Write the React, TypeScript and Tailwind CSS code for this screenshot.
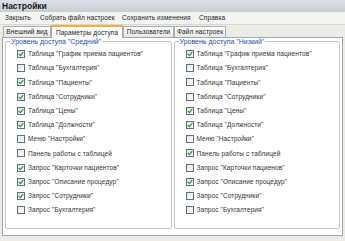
import React from 'react';

type Item = { label: string; checked: boolean };

const middle: Item[] = [
    { label: 'Таблица "График приема пациентов"', checked: true },
    { label: 'Таблица "Бухгалтерия"', checked: false },
    { label: 'Таблица "Пациенты"', checked: true },
    { label: 'Таблица "Сотрудники"', checked: true },
    { label: 'Таблица "Цены"', checked: true },
    { label: 'Таблица "Должности"', checked: true },
    { label: 'Меню "Настройки"', checked: false },
    { label: 'Панель работы с таблицей', checked: false },
    { label: 'Запрос "Карточки пациентов"', checked: true },
    { label: 'Запрос "Описание процедур"', checked: true },
    { label: 'Запрос "Сотрудники"', checked: true },
    { label: 'Запрос "Бухгалтерия"', checked: false },
];

const low: Item[] = [
    { label: 'Таблица "График приема пациентов"', checked: true },
    { label: 'Таблица "Бухгалтерия"', checked: false },
    { label: 'Таблица "Пациенты"', checked: false },
    { label: 'Таблица "Сотрудники"', checked: false },
    { label: 'Таблица "Цены"', checked: true },
    { label: 'Таблица "Должности"', checked: true },
    { label: 'Меню "Настройки"', checked: false },
    { label: 'Панель работы с таблицей', checked: true },
    { label: 'Запрос "Карточки пациенов"', checked: false },
    { label: 'Запрос "Описание процедур"', checked: true },
    { label: 'Запрос "Сотрудники"', checked: false },
    { label: 'Запрос "Бухгалтерия"', checked: false },
];

const CheckRow = ({ item }: { item: Item }) => (
    <div className="flex items-center h-[14.2px] gap-[3px]">
        <span className="w-[8px] h-[8px] border border-[#5c6f86] bg-gradient-to-br from-[#e4e4e0] to-white flex items-center justify-center shrink-0">
            {item.checked && (
                <svg width="6" height="6" viewBox="0 0 6 6">
                    <path d="M0.8 3 L2.4 4.6 L5.3 1.2" stroke="#21a121" strokeWidth="1.3" fill="none" />
                </svg>
            )}
        </span>
        <span className="text-[6.5px] tracking-[0.1px] text-[#333] whitespace-nowrap">{item.label}</span>
    </div>
);

const Group = ({ title, items }: { title: string; items: Item[] }) => (
    <fieldset className="flex-1 border border-[#c8c8c0] rounded-[2px] pl-[11px] pr-[4px] pt-[2px] pb-0 m-0 min-w-0">
        <legend className="text-[7px] text-[#2451a6] px-[1px] ml-[-7px] leading-[7px]">{title}</legend>
        <div className="flex flex-col">
            {items.map((it, i) => (
                <CheckRow key={i} item={it} />
            ))}
        </div>
    </fieldset>
);

const menu: [string, string][] = [
    ['Закрыть', 'w-[35px]'],
    ['Собрать файл настроек', 'w-[82px]'],
    ['Сохранить изменения', 'w-[77px]'],
    ['Справка', 'w-[40px]'],
];

const tabs: [string, string][] = [
    ['Внешний вид', 'w-[48px]'],
    ['Параметры доступа', 'w-[72px]'],
    ['Пользователи', 'w-[51px]'],
    ['Файл настроек', 'w-[52px]'],
];

export default function App() {
    return (
        <div className="w-[345px] h-[241px] bg-[#ecebe6] flex flex-col overflow-hidden font-['Liberation_Sans',Arial,sans-serif]">
            <div className="h-[12px] bg-gradient-to-b from-[#dde0e6] to-[#c9cdd5] flex items-center px-[2px]">
                <span className="text-[8.5px] font-bold text-[#1a1a1a]">Настройки</span>
            </div>
            <div className="h-[13px] bg-[#f4f4f2] border-b border-[#d8d8d4] flex items-center px-[5px] text-[6.5px] tracking-[0.1px] text-[#222]">
                {menu.map(([m, w]) => (
                    <span key={m} className={`${w} whitespace-nowrap`}>{m}</span>
                ))}
            </div>
            <div className="flex items-end h-[12px] px-[3px] text-[6.5px] tracking-[0.1px] text-[#222]">
                {tabs.map(([t, w], i) =>
                    i === 1 ? (
                        <div key={t} className={`${w} h-[13px] bg-white border border-[#a0a8b8] border-b-0 border-t-2 border-t-[#f0b040] flex items-center justify-center whitespace-nowrap relative z-10 mb-[-1px]`}>{t}</div>
                    ) : (
                        <div key={t} className={`${w} h-[11px] bg-gradient-to-b from-white to-[#e8e8e4] border border-[#a8b0bc] border-b-0 flex items-center justify-center whitespace-nowrap`}>{t}</div>
                    )
                )}
            </div>
            <div className="mx-[2px] h-[199px] bg-white border border-[#9ca6b4] flex gap-[2px] px-[2px] pt-0 pb-[6px]">
                <Group title={'Уровень доступа "Средний"'} items={middle} />
                <Group title={'Уровень доступа "Низкий"'} items={low} />
            </div>
        </div>
    );
}
